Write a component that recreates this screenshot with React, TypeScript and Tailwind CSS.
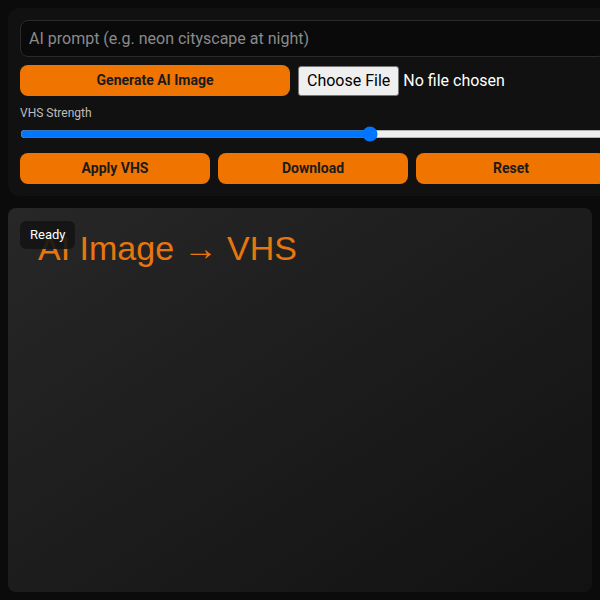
import { useState } from "react";

function OrangeButton({ children, className = "" }: { children: React.ReactNode; className?: string }) {
  return (
    <button
      type="button"
      className={`h-[31px] rounded-lg bg-[#f07400] text-[14px] font-bold text-[#1b1b1b] ${className}`}
    >
      {children}
    </button>
  );
}

export default function App() {
  const [strength, setStrength] = useState(60);

  return (
    <div className="min-h-[600px] w-[600px] overflow-hidden bg-[#0b0b0b] font-['Roboto',sans-serif]">
      <div className="flex flex-col gap-3 p-2">
        <div className="flex w-[610px] flex-col gap-2 rounded-xl bg-[#111111] px-3 pb-3 pt-3">
          <input
            type="text"
            placeholder="AI prompt (e.g. neon cityscape at night)"
            className="h-[37px] w-full rounded-lg border border-[#2a2a2a] bg-[#0a0a0a] px-2 text-[16px] text-white outline-none placeholder:text-[#8a8a8a]"
          />
          <div className="flex items-center gap-2">
            <OrangeButton className="w-[270px]">Generate AI Image</OrangeButton>
            <input type="file" className="text-[16px] text-white file:mr-1 file:rounded-[3px] file:border file:border-[#767676] file:bg-[#efefef] file:px-2 file:py-0.5 file:text-black" />
          </div>
          <div className="flex flex-col gap-1">
            <label className="text-[12px] text-[#bdbdbd]">VHS Strength</label>
            <input
              type="range"
              min={0}
              max={100}
              value={strength}
              onChange={(e) => setStrength(Number(e.target.value))}
              className="w-full"
            />
          </div>
          <div className="grid grid-cols-3 gap-2 pt-[3px]">
            <OrangeButton>Apply VHS</OrangeButton>
            <OrangeButton>Download</OrangeButton>
            <OrangeButton>Reset</OrangeButton>
          </div>
        </div>

        <div className="relative h-[384px] w-[584px] rounded-lg bg-gradient-to-br from-[#272727] to-[#121212]">
          <div className="pl-[30px] pt-[15px] font-['Liberation_Sans',sans-serif] text-[34px] text-[#e8760e]">
            AI Image → VHS
          </div>
          <span className="absolute left-3 top-[13px] rounded-md bg-[#141414]/90 px-2.5 py-1 text-[13px] text-white">
            Ready
          </span>
        </div>
      </div>
    </div>
  );
}
